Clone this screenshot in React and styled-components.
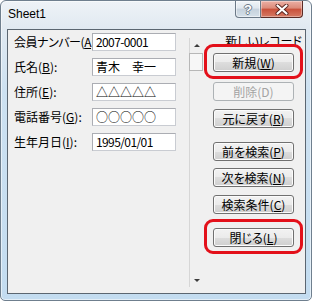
import React from 'react';
import styled, { createGlobalStyle } from 'styled-components';

const Global = createGlobalStyle`
  html, body { margin: 0; padding: 0; background: #ffffff; }
  body { font-family: "Noto Sans CJK JP", "Noto Sans", sans-serif; }
  * { box-sizing: border-box; }
`;

const Window = styled.div`
  width: 312px;
  height: 301px;
  border: 1px solid #6f7f8e;
  border-radius: 6px 6px 5px 5px;
  background: linear-gradient(to bottom, #eef3f7 0px, #e0e9f1 28px, #cde1f1 90px, #c3dcf0 100%);
  box-shadow: inset 0 0 0 1px rgba(255, 255, 255, 0.55);
  display: flex;
  flex-direction: column;
  padding: 0 5px 6px 6px;
  overflow: hidden;
`;

const TitleBar = styled.div`
  height: 28px;
  display: flex;
  justify-content: space-between;
  align-items: flex-start;
`;

const Title = styled.div`
  padding: 6px 0 0 1px;
  font-family: "Liberation Sans", "DejaVu Sans", sans-serif;
  font-size: 12px;
  line-height: 14px;
  color: #000;
`;

const Caption = styled.div`
  display: flex;
  margin-right: 3px;
`;

const HelpButton = styled.div`
  width: 26px;
  height: 17px;
  border: 1px solid #6b7987;
  border-top: none;
  border-radius: 0 0 0 4px;
  background: linear-gradient(to bottom, #f0f4f7 0%, #dfe7ee 45%, #c5d1dc 50%, #d5e0e9 100%);
  box-shadow: inset 0 0 0 1px rgba(255, 255, 255, 0.5);
  display: flex;
  align-items: center;
  justify-content: center;
  font-family: "Liberation Sans", sans-serif;
  font-weight: bold;
  font-size: 13px;
  color: #fff;
  text-shadow: 1px 0 0 #6d7b89, -1px 0 0 #6d7b89, 0 1px 0 #6d7b89, 0 -1px 0 #6d7b89;
`;

const CloseButton = styled.div`
  width: 42px;
  height: 17px;
  border: 1px solid #5b2b25;
  border-top: none;
  border-left: none;
  border-radius: 0 0 4px 0;
  background: linear-gradient(to bottom, #ecb0a5 0%, #dc8a79 45%, #c9503a 50%, #d57a64 100%);
  box-shadow: inset 0 0 0 1px rgba(255, 255, 255, 0.35);
  display: flex;
  align-items: center;
  justify-content: center;
`;

const Client = styled.div`
  flex: 1;
  display: flex;
  border: 1px solid #5b6671;
  background: #f0f0f0;
`;

const FormColumn = styled.div`
  width: 181px;
  padding: 3px 0 0 6px;
  display: flex;
  flex-direction: column;
  gap: 7px;
`;

const Row = styled.div`
  display: flex;
  align-items: center;
  height: 18px;
`;

const Label = styled.div`
  width: 78px;
  overflow: hidden;
  white-space: nowrap;
  font-size: 12px;
  line-height: 18px;
  color: #000;
  font-feature-settings: "palt";
  letter-spacing: ${(p) => (p.$tight ? '-0.45px' : '0')};
`;

const Field = styled.div`
  width: 84px;
  height: 18px;
  border: 1px solid #abadb3;
  border-bottom-color: #c9ccd2;
  border-right-color: #c9ccd2;
  background: #ffffff;
  padding: 0 3px;
  font-size: 12px;
  line-height: 16px;
  white-space: nowrap;
  overflow: hidden;
  color: #000;
  letter-spacing: ${(p) => (p.$narrow ? '-0.6px' : '0')};
`;

const ScrollColumn = styled.div`
  width: 14px;
  margin: 8px 0 6px 0;
  border-left: 1px solid #d6d6d6;
  display: flex;
  flex-direction: column;
  justify-content: space-between;
`;

const ArrowBox = styled.div`
  height: ${(p) => p.$h}px;
  display: flex;
  align-items: center;
  justify-content: center;
`;

const Arrow = styled.div`
  width: 0;
  height: 0;
  border-left: 3px solid transparent;
  border-right: 3px solid transparent;
  ${(p) => (p.$down ? 'border-top: 3px solid #3c3c3c;' : 'border-bottom: 3px solid #3c3c3c;')}
`;

const Thumb = styled.div`
  height: 18px;
  margin-left: -1px;
  border: 1px solid #b7b7b7;
  background: #f7f7f7;
`;

const ScrollTop = styled.div`
  display: flex;
  flex-direction: column;
`;

const RightColumn = styled.div`
  flex: 1;
  display: flex;
  flex-direction: column;
  padding-top: 6px;
`;

const RecordLabel = styled.div`
  height: 11px;
  overflow: hidden;
  text-align: right;
  padding-right: 3px;
  font-size: 12px;
  font-feature-settings: "palt";
  color: #000;
`;

const RecordText = styled.span`
  display: block;
  margin-top: -1px;
  line-height: 12px;
`;

const ButtonList = styled.div`
  margin-left: 10px;
  width: 81px;
  display: flex;
  flex-direction: column;
`;

const Button = styled.div`
  position: relative;
  height: 19px;
  margin-top: ${(p) => p.$mt}px;
  border: 1px solid ${(p) => (p.$disabled ? '#adb2b5' : '#707070')};
  border-radius: 3px;
  background: ${(p) =>
    p.$disabled
      ? '#f4f4f4'
      : 'linear-gradient(to bottom, #f2f2f2 0%, #ebebeb 50%, #dddddd 50%, #cfcfcf 100%)'};
  box-shadow: inset 0 0 0 1px ${(p) => (p.$disabled ? '#f4f4f4' : '#fbfbfb')};
  font-size: 12px;
  line-height: 17px;
  text-align: center;
  white-space: nowrap;
  color: ${(p) => (p.$disabled ? '#a3a3a3' : '#000')};
  font-feature-settings: "palt";

  ${(p) =>
    p.$highlight &&
    `
    &::after {
      content: "";
      position: absolute;
      top: -10px;
      bottom: -8px;
      left: -10px;
      right: -10px;
      border: 3px solid #e3101a;
      border-radius: 9px;
      pointer-events: none;
    }
  `}
`;

const fields = [
  { label: <>会員ナンバー(<u>A</u></>, value: '2007-0001', narrow: true, tight: true },
  { label: <>氏名(<u>B</u>):</>, value: '青木　幸一' },
  { label: <>住所(<u>E</u>):</>, value: '△△△△△' },
  { label: <>電話番号(<u>G</u>):</>, value: '○○○○○' },
  { label: <>生年月日(<u>I</u>):</>, value: '1995/01/01', narrow: true },
];

const buttons = [
  { text: <>新規(<u>W</u>)</>, mt: 6, highlight: true },
  { text: <>削除(D)</>, mt: 10, disabled: true },
  { text: <>元に戻す(<u>R</u>)</>, mt: 8 },
  { text: <>前を検索(<u>P</u>)</>, mt: 14 },
  { text: <>次を検索(<u>N</u>)</>, mt: 7 },
  { text: <>検索条件(<u>C</u>)</>, mt: 8 },
  { text: <>閉じる(<u>L</u>)</>, mt: 14, highlight: true },
];

export default function App() {
  return (
    <>
      <Global />
      <Window>
        <TitleBar>
          <Title>Sheet1</Title>
          <Caption>
            <HelpButton>?</HelpButton>
            <CloseButton>
              <svg width="14" height="11" viewBox="0 0 14 11">
                <path d="M2.5 1.5 L11.5 9.5 M11.5 1.5 L2.5 9.5" stroke="#5a2620" strokeWidth="4" strokeLinecap="round" />
                <path d="M2.5 1.5 L11.5 9.5 M11.5 1.5 L2.5 9.5" stroke="#ffffff" strokeWidth="2.2" strokeLinecap="round" />
              </svg>
            </CloseButton>
          </Caption>
        </TitleBar>
        <Client>
          <FormColumn>
            {fields.map((f, i) => (
              <Row key={i}>
                <Label $tight={f.tight}>{f.label}</Label>
                <Field $narrow={f.narrow}>{f.value}</Field>
              </Row>
            ))}
          </FormColumn>
          <ScrollColumn>
            <ScrollTop>
              <ArrowBox $h={15}>
                <Arrow />
              </ArrowBox>
              <Thumb />
            </ScrollTop>
            <ArrowBox $h={14}>
              <Arrow $down />
            </ArrowBox>
          </ScrollColumn>
          <RightColumn>
            <RecordLabel>
              <RecordText>新しいレコード</RecordText>
            </RecordLabel>
            <ButtonList>
              {buttons.map((b, i) => (
                <Button key={i} $mt={b.mt} $disabled={b.disabled} $highlight={b.highlight}>
                  {b.text}
                </Button>
              ))}
            </ButtonList>
          </RightColumn>
        </Client>
      </Window>
    </>
  );
}
